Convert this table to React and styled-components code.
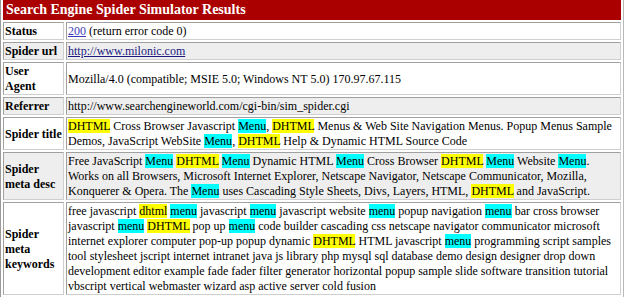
import React from 'react';
import styled, { createGlobalStyle } from 'styled-components';

const GlobalStyle = createGlobalStyle`
  body {
    margin: 0;
    background: #fff;
    font-family: "Liberation Serif", "Times New Roman", serif;
  }
`;

const Results = styled.table`
  width: 624px;
  border-collapse: separate;
  border-spacing: 2px;
  border: 1px solid #9a9a9a;
  border-right-color: #b8b8b8;
  border-bottom: 2px solid #b8b8b8;
  font-size: 12px;
  line-height: 15px;
  color: #000;
  margin-top: -3px;
`;

const Title = styled.th`
  background: #aa0000;
  color: #fff;
  font-size: 14px;
  line-height: 18px;
  font-weight: bold;
  text-align: left;
  padding: 1px 4px 1px 3px;
`;

const Cell = styled.td`
  vertical-align: middle;
  padding: 1px 1px 0;
  border: 1px solid #a0a0a0;
  border-right-color: #cfcfcf;
  border-bottom-color: #cfcfcf;
  background: ${(p) => (p.$alt ? '#eeeeee' : '#fff')};
`;

const Label = styled(Cell).attrs({ as: 'th' })`
  width: 57px;
  text-align: left;
  font-weight: bold;
`;

const Link = styled.a`
  color: ${(p) => p.$tone};
  text-decoration: underline;
`;

const Mark = styled.span`
  background: ${(p) => (p.$kind === 'menu' ? '#00ffff' : '#ffff00')};
`;

// highlight DHTML / menu words inside a plain string
const highlight = (text) =>
  text.split(/(\bDHTML\b|\bdhtml\b|\bMenu\b|\bmenu\b)/).map((part, i) => {
    if (/^dhtml$/i.test(part)) return <Mark key={i} $kind="dhtml">{part}</Mark>;
    if (/^menu$/i.test(part)) return <Mark key={i} $kind="menu">{part}</Mark>;
    return part;
  });

const rows = [
  {
    label: 'Spider title',
    text: 'DHTML Cross Browser Javascript Menu, DHTML Menus & Web Site Navigation Menus. Popup Menus Sample Demos, JavaScript WebSite Menu, DHTML Help & Dynamic HTML Source Code',
  },
  {
    label: 'Spider meta desc',
    alt: true,
    text: 'Free JavaScript Menu DHTML Menu Dynamic HTML Menu Cross Browser DHTML Menu Website Menu. Works on all Browsers, Microsoft Internet Explorer, Netscape Navigator, Netscape Communicator, Mozilla, Konquerer & Opera. The Menu uses Cascading Style Sheets, Divs, Layers, HTML, DHTML and JavaScript.',
  },
  {
    label: 'Spider meta keywords',
    text: 'free javascript dhtml menu javascript menu javascript website menu popup navigation menu bar cross browser javascript menu DHTML pop up menu code builder cascading css netscape navigator communicator microsoft internet explorer computer pop-up popup dynamic DHTML HTML javascript menu programming script samples tool stylesheet jscript internet intranet java js library php mysql sql database demo design designer drop down development editor example fade fader filter generator horizontal popup sample slide software transition tutorial vbscript vertical webmaster wizard asp active server cold fusion',
  },
];

export default function App() {
  return (
    <>
      <GlobalStyle />
      <Results>
        <tbody>
          <tr>
            <Title colSpan={2}>Search Engine Spider Simulator Results</Title>
          </tr>
          <tr>
            <Label>Status</Label>
            <Cell>
              <Link href="#" $tone="#3a3ab8">200</Link> (return error code 0)
            </Cell>
          </tr>
          <tr>
            <Label $alt>Spider url</Label>
            <Cell $alt>
              <Link href="#" $tone="#1a1a80">http://www.milonic.com</Link>
            </Cell>
          </tr>
          <tr>
            <Label>
              User
              <br />
              Agent
            </Label>
            <Cell>Mozilla/4.0 (compatible; MSIE 5.0; Windows NT 5.0) 170.97.67.115</Cell>
          </tr>
          <tr>
            <Label $alt>Referrer</Label>
            <Cell $alt>http://www.searchengineworld.com/cgi-bin/sim_spider.cgi</Cell>
          </tr>
          {rows.map((r) => (
            <tr key={r.label}>
              <Label $alt={r.alt}>{r.label}</Label>
              <Cell $alt={r.alt}>{highlight(r.text)}</Cell>
            </tr>
          ))}
        </tbody>
      </Results>
    </>
  );
}
